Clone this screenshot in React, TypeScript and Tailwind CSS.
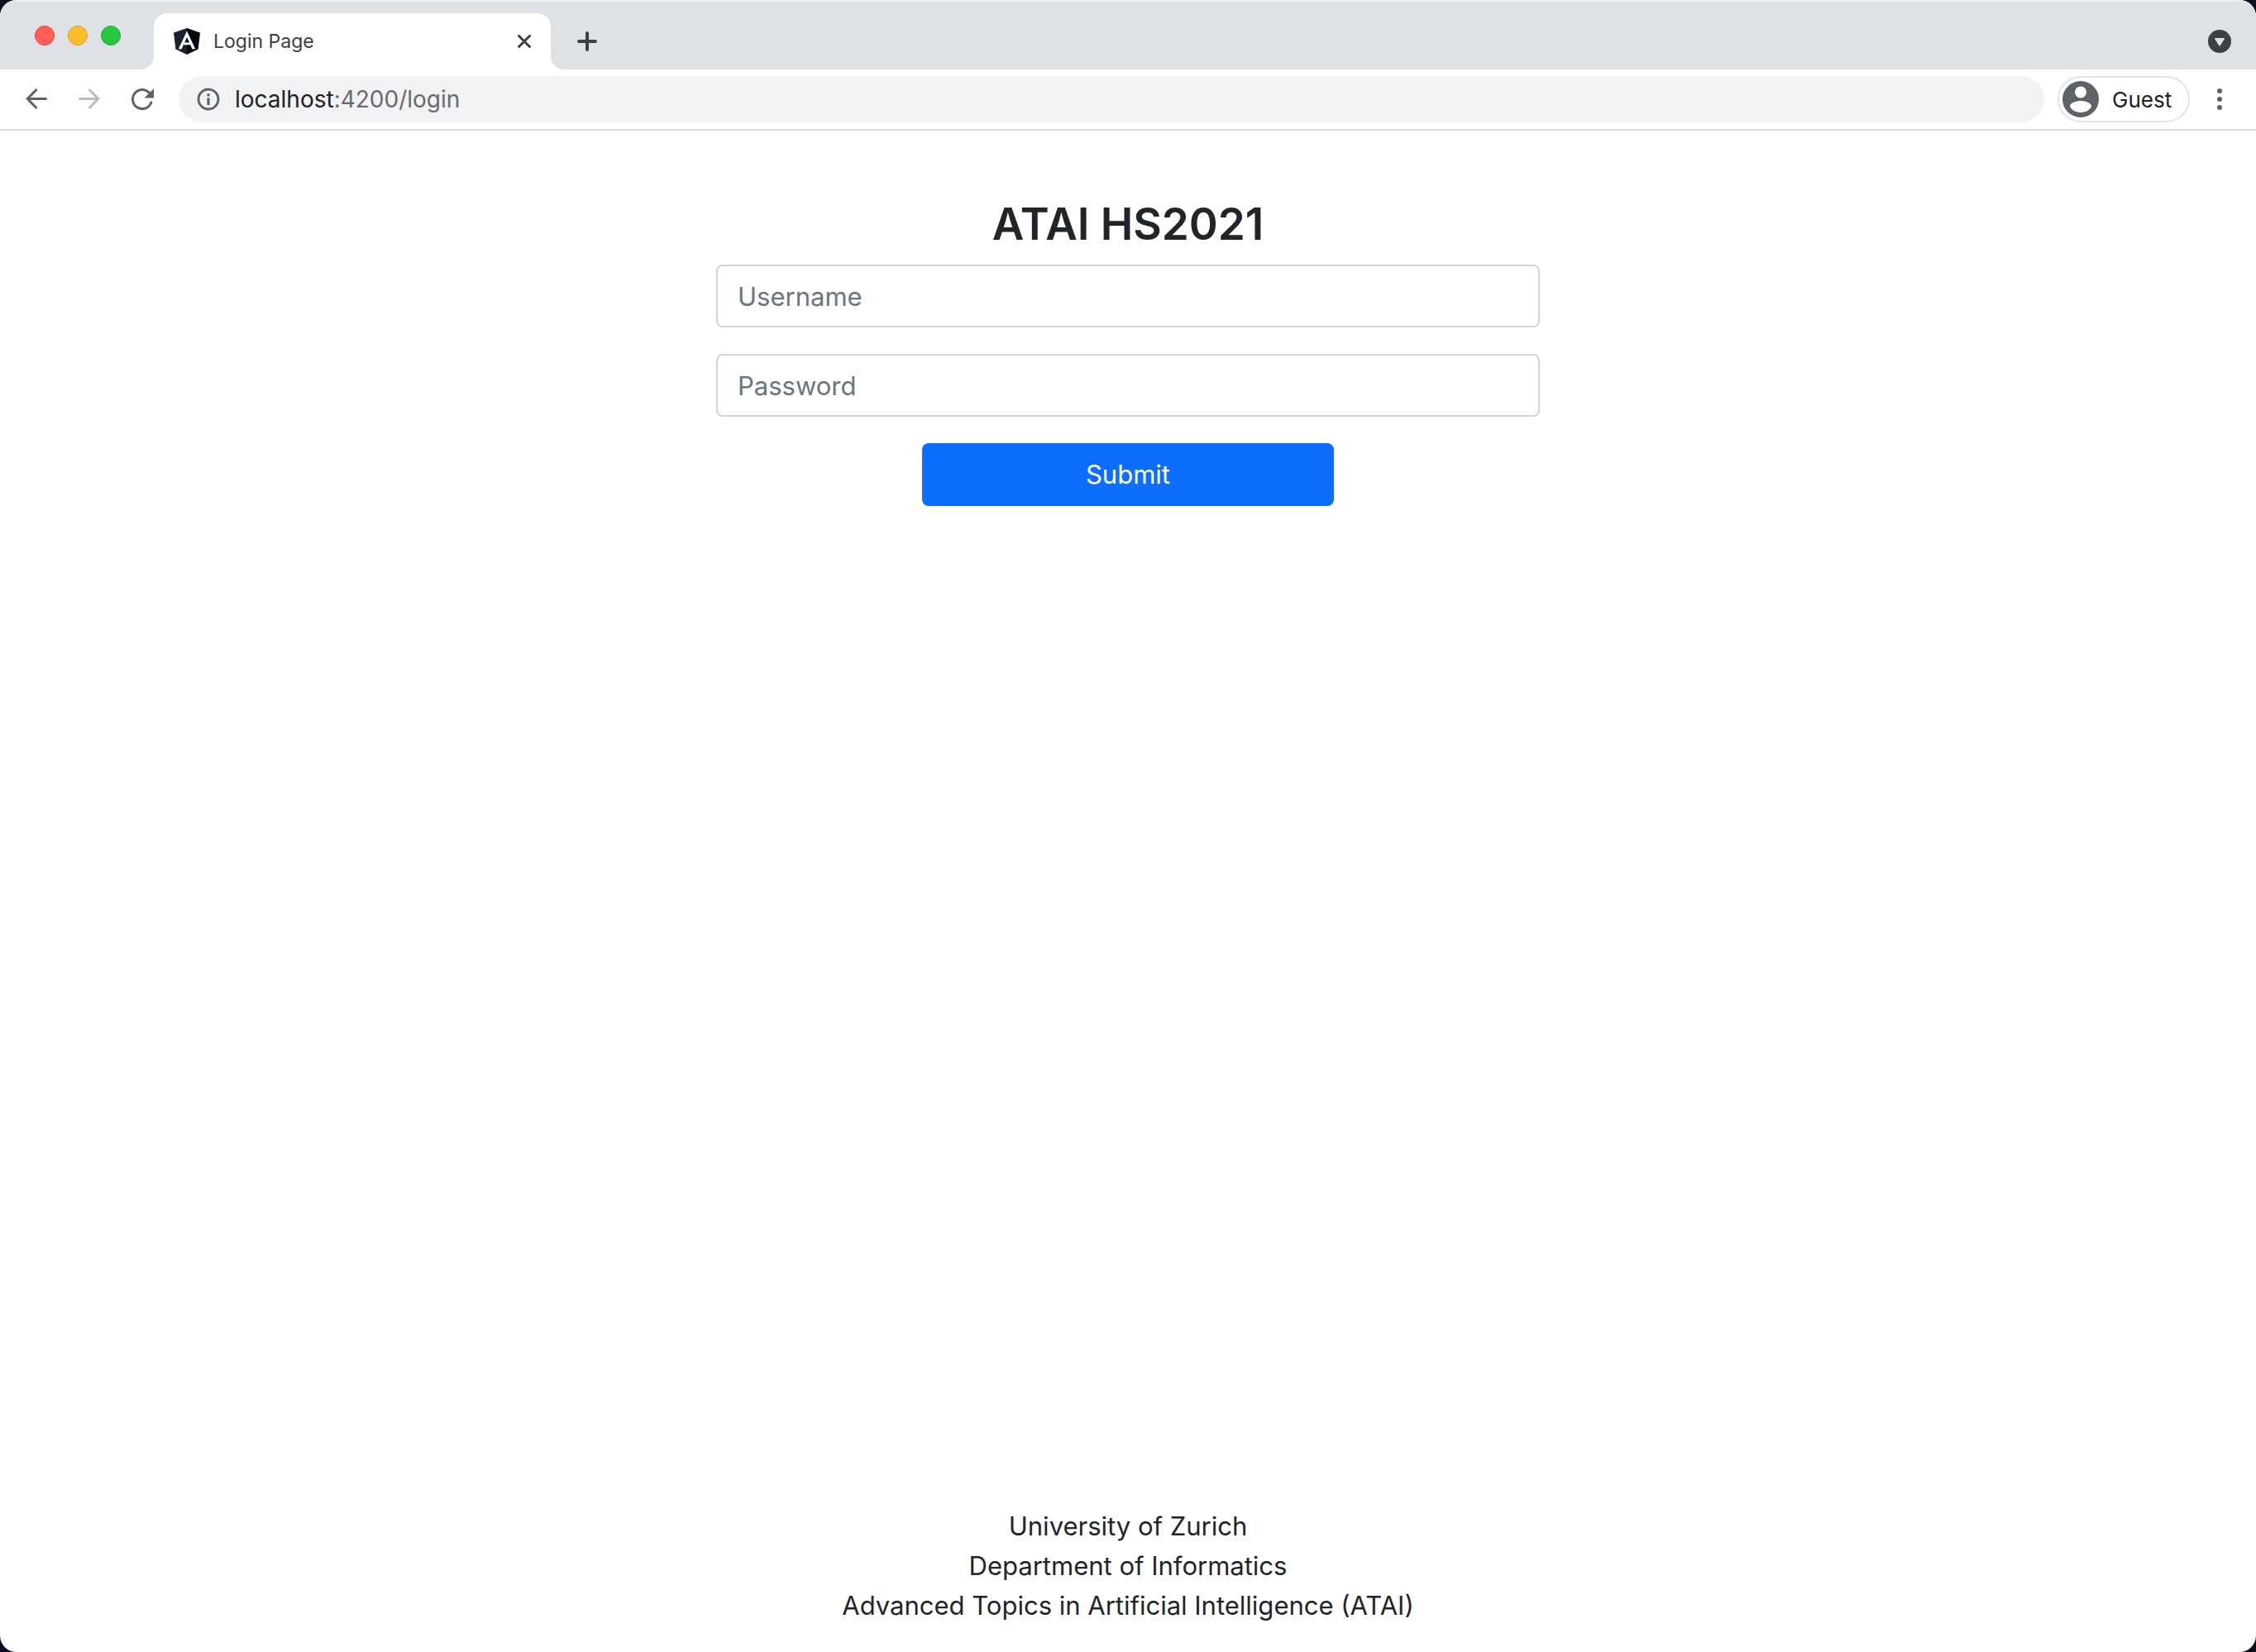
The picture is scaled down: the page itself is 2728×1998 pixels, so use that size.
import React from "react";

function AngularLogo() {
  return (
    <svg className="h-8 w-8 shrink-0" viewBox="0 0 32 32" aria-hidden="true">
      <path d="M16 0 0 5.6l2.4 20L16 32z" fill="#1b222d" />
      <path d="M16 0l16 5.6-2.4 20L16 32z" fill="#03060f" />
      <path
        fillRule="evenodd"
        fill="#fff"
        d="M16 3.6 5.8 25.2h3.9l2-4.9h8.6l2 4.9h3.9zM16 11l3 6.6h-6z"
      />
    </svg>
  );
}

function TabStrip() {
  return (
    <header className="flex h-[84px] items-end bg-[#dee1e6] shadow-[inset_0_2px_0_#eceef0]">
      <div className="flex h-full w-[186px] shrink-0 gap-4 pt-[31px] pl-[42px]">
        <button aria-label="Close window" className="h-6 w-6 rounded-full border border-[#e0443e] bg-[#ff5f57]" />
        <button aria-label="Minimize window" className="h-6 w-6 rounded-full border border-[#dea123] bg-[#febc2e]" />
        <button aria-label="Zoom window" className="h-6 w-6 rounded-full border border-[#1aab29] bg-[#28c840]" />
      </div>
      <div className="relative flex h-[68px] w-[480px] items-center rounded-t-2xl bg-white pr-6 pl-6">
        <svg className="absolute bottom-0 -left-4 h-4 w-4" viewBox="0 0 16 16" aria-hidden="true">
          <path d="M16 0v16H0A16 16 0 0 0 16 0z" fill="#fff" />
        </svg>
        <svg className="absolute -right-4 bottom-0 h-4 w-4" viewBox="0 0 16 16" aria-hidden="true">
          <path d="M0 0v16h16A16 16 0 0 1 0 0z" fill="#fff" />
        </svg>
        <AngularLogo />
        <span className="ml-4 flex-1 text-[23px] text-[#3c4043]">Login Page</span>
        <button aria-label="Close tab">
          <svg className="h-4 w-4" viewBox="0 0 16 16" fill="none" stroke="#3c4043" strokeWidth="3" strokeLinecap="round">
            <path d="M1.500 1.500l13 13M14.500 1.500l-13 13" />
          </svg>
        </button>
      </div>
      <button aria-label="New tab" className="ml-8 flex h-[68px] items-center">
        <svg className="h-6 w-6" viewBox="0 0 24 24" fill="none" stroke="#3c4043" strokeWidth="4" strokeLinecap="round">
          <path d="M12 2v20M2 12h20" />
        </svg>
      </button>
      <button aria-label="Search tabs" className="mr-[30px] ml-auto flex h-[68px] items-center">
        <svg className="h-7 w-7" viewBox="0 0 28 28">
          <circle cx="14" cy="14" r="14" fill="#3c4043" />
          <path d="M8.400 10.500h11.200L14 19.500z" fill="#dee1e6" stroke="#dee1e6" strokeWidth="1" strokeLinejoin="round" />
        </svg>
      </button>
    </header>
  );
}

function Toolbar() {
  return (
    <nav className="flex h-[74px] items-center border-b-2 border-[#dadce0] bg-white pr-[41px] pl-[31px]">
      <button aria-label="Back" className="mr-[38px]">
        <svg className="h-[26px] w-[26px]" viewBox="0 0 26 26" fill="none" stroke="#5f6368" strokeWidth="3" strokeLinecap="round">
          <path d="M24.500 12.500H3" />
          <path d="M13.500 1 2.200 12.500 13.500 24" strokeLinecap="butt" />
        </svg>
      </button>
      <button aria-label="Forward" className="mr-[37px]">
        <svg className="h-[26px] w-[26px]" viewBox="0 0 26 26" fill="none" stroke="#babcbe" strokeWidth="3" strokeLinecap="round">
          <path d="M1.500 12.500H23" />
          <path d="M12.500 1 23.800 12.500 12.500 24" strokeLinecap="butt" />
        </svg>
      </button>
      <button aria-label="Reload" className="mr-[30px]">
        <svg className="h-7 w-7" viewBox="0 0 28 28">
          <path
            d="M24.800 18A11.500 11.500 0 1 1 22.100 5.900"
            fill="none"
            stroke="#5f6368"
            strokeWidth="3"
            strokeLinecap="round"
          />
          <path d="M28 1v11.500H16.500z" fill="#5f6368" />
        </svg>
      </button>
      <label className="flex h-14 flex-1 items-center rounded-full bg-[#f1f3f4] pl-[22px]">
        <svg className="mr-[18px] h-7 w-7" viewBox="0 0 28 28" aria-hidden="true">
          <circle cx="14" cy="14" r="12" fill="none" stroke="#5f6368" strokeWidth="2.8" />
          <path d="M12.400 7.200h3.200v3.200h-3.200zM12.400 12.600h3.200V21h-3.200z" fill="#5f6368" />
        </svg>
        <span className="text-[28px] text-[#202124]">
          localhost<span className="text-[#696b6e]">:4200/login</span>
        </span>
      </label>
      <button className="ml-4 flex h-14 w-40 items-center rounded-full border-2 border-[#e1e3e4] pl-1 text-[#202124]">
        <svg className="mr-4 h-11 w-11 shrink-0" viewBox="0 0 44 44" aria-hidden="true">
          <circle cx="22" cy="22" r="22" fill="#5f6368" />
          <circle cx="22" cy="13.500" r="7" fill="#fff" />
          <path d="M9 31C9 26 17 24 22 24s13 2 13 7c-3 5-8 7-13 7S12 36 9 31z" fill="#fff" />
        </svg>
        <span className="text-[26px]">Guest</span>
      </button>
      <button aria-label="Menu" className="ml-[33px]">
        <svg className="h-[26px] w-[6px]" viewBox="0 0 6 26" fill="#5f6368">
          <circle cx="3" cy="3" r="3" />
          <circle cx="3" cy="13" r="3" />
          <circle cx="3" cy="23" r="3" />
        </svg>
      </button>
    </nav>
  );
}

const fieldClass =
  "mb-8 block h-[76px] w-full rounded-lg border-2 border-[#ced4da] bg-white px-6 text-[#212529] placeholder:text-[#6c757d] placeholder:opacity-100";

function LoginForm() {
  return (
    <form className="mx-auto w-full max-w-[996px] pt-[80px]" onSubmit={(e) => e.preventDefault()}>
      <h1 className="mb-4 text-center text-[53px] leading-[66px] font-semibold">ATAI HS2021</h1>
      <input aria-label="Username" placeholder="Username" className={fieldClass} />
      <input aria-label="Password" type="password" placeholder="Password" className={fieldClass} />
      <button type="submit" className="mx-auto block h-[76px] w-1/2 rounded-lg bg-[#0d6efd] text-white">
        Submit
      </button>
    </form>
  );
}

export default function App() {
  return (
    <div className="min-h-screen bg-[#0b0d1c] font-['Inter',sans-serif]">
      <div className="flex min-h-screen flex-col overflow-hidden rounded-[20px] bg-white">
        <TabStrip />
        <Toolbar />
        <main className="flex flex-1 flex-col text-[31px] leading-[48px] text-[#212529]">
          <LoginForm />
          <footer className="mt-auto pb-8 text-center">
            <p>University of Zurich</p>
            <p>Department of Informatics</p>
            <p>Advanced Topics in Artificial Intelligence (ATAI)</p>
          </footer>
        </main>
      </div>
    </div>
  );
}
